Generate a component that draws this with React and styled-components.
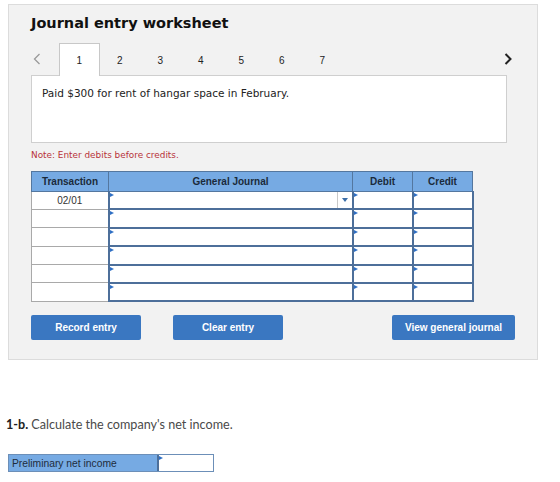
import React from 'react';
import styled, { createGlobalStyle } from 'styled-components';

const GlobalStyle = createGlobalStyle`
  body {
    margin: 0;
    background: #fff;
    font-family: "Liberation Sans", Arial, sans-serif;
  }
`;

const Page = styled.div`
  width: 560px;
  padding-top: 4px;
`;

const Panel = styled.div`
  width: 530px;
  margin-left: 8px;
  box-sizing: border-box;
  background: #f2f2f2;
  border: 1px solid #dcdcdc;
  padding: 8px 22px 19px 22px;
`;

const Title = styled.h2`
  margin: 0;
  font-family: "DejaVu Sans", Verdana, sans-serif;
  font-size: 14.5px;
  font-weight: bold;
  color: #111;
  line-height: 20px;
`;

const TabRow = styled.div`
  display: flex;
  align-items: stretch;
  height: 32px;
  margin-top: 10px;
`;

const Arrow = styled.div`
  width: 28px;
  display: flex;
  align-items: center;
  padding: ${({ right }) => (right ? '0 3px 0 0' : '0 0 0 2px')};
  justify-content: ${({ right }) => (right ? 'flex-end' : 'flex-start')};
  margin-left: ${({ right }) => (right ? 'auto' : '0')};
  box-sizing: border-box;
`;

const Tab = styled.div`
  width: 40.5px;
  box-sizing: border-box;
  display: flex;
  align-items: center;
  justify-content: center;
  font-size: 10px;
  color: #222;
  background: ${({ active }) => (active ? '#fff' : 'transparent')};
  border: 1px solid ${({ active }) => (active ? '#c8c8c8' : 'transparent')};
  border-bottom: none;
  margin-bottom: -1px;
  position: relative;
  z-index: 1;
`;

const Prompt = styled.div`
  width: 476px;
  height: 68px;
  box-sizing: border-box;
  background: #fff;
  border: 1px solid #cfcfcf;
  padding: 11px 10px;
  font-family: "DejaVu Sans", Verdana, sans-serif;
  font-size: 10.5px;
  color: #222;
`;

const Note = styled.div`
  margin-top: 7px;
  font-family: "DejaVu Sans", Verdana, sans-serif;
  font-size: 8.9px;
  color: #b8333a;
`;

const Journal = styled.table`
  margin-top: 11px;
  border-collapse: collapse;
  width: 441px;
  table-layout: fixed;
`;

const Head = styled.th`
  background: #76aae3;
  border: 1px solid #54779f;
  height: 19px;
  padding: 0;
  font-size: 10px;
  font-weight: bold;
  color: #1b2a3b;
  text-align: center;
`;

const DateCell = styled.td`
  background: #fff;
  border: 1px solid #a9a9a9;
  height: 16.4px;
  padding: 0;
  font-size: 10px;
  color: #333;
  text-align: center;
`;

const EntryCell = styled.td`
  background: #fff;
  border: 2px solid #4d6f9a;
  border-top-width: 1px;
  height: 16.4px;
  padding: 0;
  position: relative;
  &::before {
    content: '';
    position: absolute;
    left: 0;
    top: 1px;
    border-left: 4px solid #2f6fc4;
    border-top: 2.5px solid transparent;
    border-bottom: 2.5px solid transparent;
  }
`;

const Select = styled.div`
  display: flex;
  justify-content: flex-end;
  align-items: stretch;
  height: 16px;
`;

const Caret = styled.div`
  width: 14px;
  border-left: 1px solid #c9c9c9;
  display: flex;
  align-items: center;
  justify-content: center;
  &::after {
    content: '';
    border-top: 4px solid #3b6ea8;
    border-left: 3.5px solid transparent;
    border-right: 3.5px solid transparent;
  }
`;

const Actions = styled.div`
  display: flex;
  margin-top: 13px;
  gap: 32px;
`;

const Button = styled.button`
  height: 25px;
  width: ${({ wide }) => (wide ? '123px' : '110px')};
  margin-left: ${({ push }) => (push ? 'auto' : '0')};
  border: none;
  border-radius: 2px;
  background: #3a77c1;
  color: #fff;
  font-family: "Liberation Sans", Arial, sans-serif;
  font-size: 10px;
  font-weight: bold;
  padding: 0;
  cursor: pointer;
`;

const Question = styled.p`
  margin: 57px 0 0 6px;
  font-family: Lato, "Open Sans", sans-serif;
  font-size: 12.6px;
  color: #4a4a4a;
  b {
    color: #222;
  }
`;

const Answer = styled.div`
  display: flex;
  margin: 22px 0 0 8px;
  width: 206px;
  height: 18px;
  border: 1px solid #6c8fb8;
  box-sizing: border-box;
`;

const AnswerLabel = styled.div`
  flex: 1;
  background: #76aae3;
  font-size: 10.3px;
  color: #1e2c3c;
  display: flex;
  align-items: center;
  padding-left: 3px;
`;

const AnswerField = styled.div`
  width: 54px;
  background: #fff;
  border-left: 2px solid #4d6f9a;
  position: relative;
  &::before {
    content: '';
    position: absolute;
    left: 0;
    top: 1px;
    border-left: 4px solid #2f6fc4;
    border-top: 2.5px solid transparent;
    border-bottom: 2.5px solid transparent;
  }
`;

const tabs = [1, 2, 3, 4, 5, 6, 7];
const rows = ['02/01', '', '', '', '', ''];

const Chevron = ({ dir }) => (
  <svg width="8" height="12" viewBox="0 0 8 12">
    <path
      d={dir === 'left' ? 'M6.5 1 L1.5 6 L6.5 11' : 'M1.5 1 L6.5 6 L1.5 11'}
      fill="none"
      stroke={dir === 'left' ? '#9a9a9a' : '#222'}
      strokeWidth={dir === 'left' ? 1.3 : 2}
    />
  </svg>
);

const App = () => (
  <Page>
    <GlobalStyle />
    <Panel>
      <Title>Journal entry worksheet</Title>
      <TabRow>
        <Arrow><Chevron dir="left" /></Arrow>
        {tabs.map((t) => (
          <Tab key={t} active={t === 1}>{t}</Tab>
        ))}
        <Arrow right><Chevron dir="right" /></Arrow>
      </TabRow>
      <Prompt>Paid $300 for rent of hangar space in February.</Prompt>
      <Note>Note: Enter debits before credits.</Note>
      <Journal>
        <colgroup>
          <col style={{ width: 77 }} />
          <col style={{ width: 244 }} />
          <col style={{ width: 60 }} />
          <col style={{ width: 60 }} />
        </colgroup>
        <thead>
          <tr>
            <Head>Transaction</Head>
            <Head>General Journal</Head>
            <Head>Debit</Head>
            <Head>Credit</Head>
          </tr>
        </thead>
        <tbody>
          {rows.map((d, i) => (
            <tr key={i}>
              <DateCell>{d}</DateCell>
              <EntryCell>
                {i === 0 && (
                  <Select><Caret /></Select>
                )}
              </EntryCell>
              <EntryCell />
              <EntryCell />
            </tr>
          ))}
        </tbody>
      </Journal>
      <Actions>
        <Button>Record entry</Button>
        <Button>Clear entry</Button>
        <Button wide push>View general journal</Button>
      </Actions>
    </Panel>
    <Question><b>1-b.</b> Calculate the company's net income.</Question>
    <Answer>
      <AnswerLabel>Preliminary net income</AnswerLabel>
      <AnswerField />
    </Answer>
  </Page>
);

export default App;
